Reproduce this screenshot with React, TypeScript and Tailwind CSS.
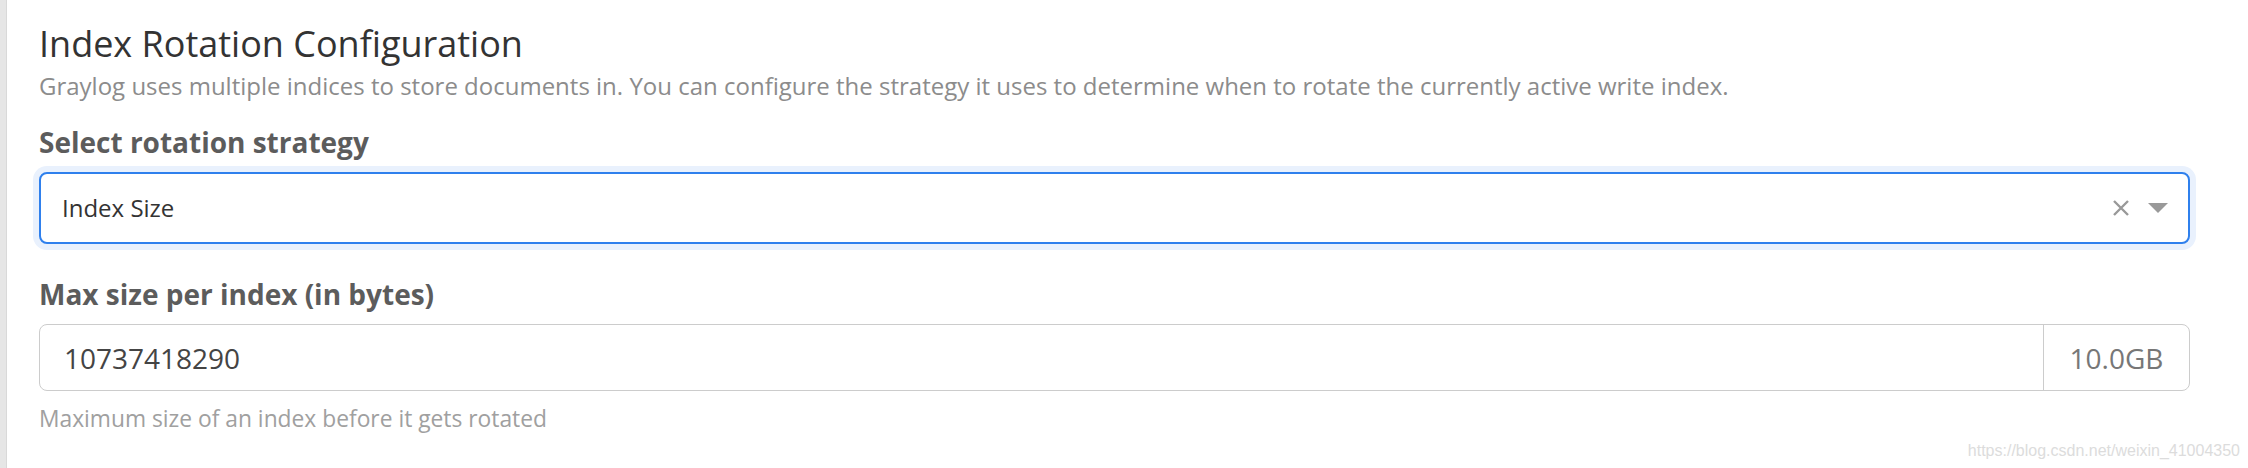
export default function App() {
  return (
    <div className="relative flex min-h-[468px] w-[2248px] bg-white font-['Open_Sans',sans-serif]">
      <div className="w-[7px] shrink-0 bg-[#e6e6e6] border-r border-[#d9d9d9]" />

      <div className="flex-1 pl-[32px] pr-[58px] pt-[24px]">
        <h2 className="text-[36px] leading-[40px] font-normal text-[#333333]">
          Index Rotation Configuration
        </h2>
        <p className="mt-[6px] text-[24px] leading-[32px] text-[#8c8c8c]">
          Graylog uses multiple indices to store documents in. You can configure the strategy it uses to
          determine when to rotate the currently active write index.
        </p>

        <label className="mt-[22px] block text-[28px] leading-[36px] font-bold text-[#5c5c5c]">
          Select rotation strategy
        </label>
        <div className="mt-[12px] flex h-[72px] items-center rounded-[8px] border-2 border-[#2f80ed] bg-white pl-[21px] pr-[20px] shadow-[0_0_0_6px_#e9f1fd]">
          <span className="flex-1 text-[24px] text-[#333333]">Index Size</span>
          <svg width="18" height="18" viewBox="0 0 18 18" className="mr-[18px]">
            <path d="M2 2 L16 16 M16 2 L2 16" stroke="#999999" strokeWidth="2.4" />
          </svg>
          <svg width="20" height="10" viewBox="0 0 20 10">
            <path d="M0 0 L20 0 L10 10 Z" fill="#999999" />
          </svg>
        </div>

        <label className="mt-[32px] block text-[28px] leading-[36px] font-bold text-[#5c5c5c]">
          Max size per index (in bytes)
        </label>
        <div className="mt-[12px] flex h-[67px] rounded-[8px] border border-[#cccccc] bg-white">
          <div className="flex flex-1 items-center pl-[24px] text-[28px] text-[#444444]">10737418290</div>
          <div className="flex w-[146px] items-center justify-center border-l border-[#cccccc] text-[28px] text-[#777777]">
            10.0GB
          </div>
        </div>
        <p className="mt-[12px] text-[22.8px] leading-[32px] text-[#a0a0a0]">
          Maximum size of an index before it gets rotated
        </p>
      </div>

      <span className="absolute bottom-[5px] right-[8px] font-['Liberation_Sans',sans-serif] text-[16px] text-[#dcdcdc]">
        https://blog.csdn.net/weixin_41004350
      </span>
    </div>
  )
}
